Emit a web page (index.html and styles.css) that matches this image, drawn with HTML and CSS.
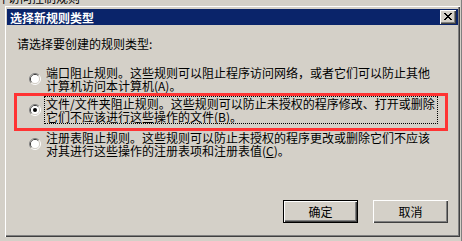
FILE: index.html
```html
<!DOCTYPE html>
<html lang="zh-CN">
<head>
<meta charset="utf-8">
<link rel="stylesheet" href="styles.css">
</head>
<body>
<div class="backdrop">
  <div class="backdrop-text">件访问控制规则</div>
</div>
<div class="dialog">
  <div class="titlebar">
    <span class="title">选择新规则类型</span>
    <span class="close">
      <svg width="8" height="7" viewBox="0 0 8 7" shape-rendering="crispEdges">
        <path d="M0 0h2v1h-2zM6 0h2v1h-2zM1 1h2v1h-2zM5 1h2v1h-2zM2 2h4v1h-4zM3 3h2v1h-2zM2 4h4v1h-4zM1 5h2v1h-2zM5 5h2v1h-2zM0 6h2v1h-2zM6 6h2v1h-2z" fill="#000"/>
      </svg>
    </span>
  </div>
  <div class="body">
    <div class="prompt">请选择要创建的规则类型:</div>
    <div class="options">
      <div class="option">
        <svg class="radio" width="12" height="12" viewBox="0 0 12 12">
          <path d="M2.11 9.89A5.5 5.5 0 0 1 9.89 2.11" fill="none" stroke="#808080"/>
          <path d="M9.89 2.11A5.5 5.5 0 0 1 2.11 9.89" fill="none" stroke="#fff"/>
          <path d="M2.82 9.18A4.5 4.5 0 0 1 9.18 2.82" fill="none" stroke="#404040"/>
          <path d="M9.18 2.82A4.5 4.5 0 0 1 2.82 9.18" fill="none" stroke="#d4d0c8"/>
          <circle cx="6" cy="6" r="4" fill="#fff"/>
        </svg>
        <span class="label">端口阻止规则。这些规则可以阻止程序访问网络，或者它们可以防止其他计算机访问本计算机(A)。</span>
      </div>
      <div class="option">
        <svg class="radio" width="12" height="12" viewBox="0 0 12 12">
          <path d="M2.11 9.89A5.5 5.5 0 0 1 9.89 2.11" fill="none" stroke="#808080"/>
          <path d="M9.89 2.11A5.5 5.5 0 0 1 2.11 9.89" fill="none" stroke="#fff"/>
          <path d="M2.82 9.18A4.5 4.5 0 0 1 9.18 2.82" fill="none" stroke="#404040"/>
          <path d="M9.18 2.82A4.5 4.5 0 0 1 2.82 9.18" fill="none" stroke="#d4d0c8"/>
          <circle cx="6" cy="6" r="4" fill="#fff"/>
          <circle cx="6" cy="6" r="2" fill="#000"/>
        </svg>
        <span class="label focused">文件/文件夹阻止规则。这些规则可以防止未授权的程序修改、打开或删除它们不应该进行这些操作的文件(B)。</span>
      </div>
      <div class="option third">
        <svg class="radio" width="12" height="12" viewBox="0 0 12 12">
          <path d="M2.11 9.89A5.5 5.5 0 0 1 9.89 2.11" fill="none" stroke="#808080"/>
          <path d="M9.89 2.11A5.5 5.5 0 0 1 2.11 9.89" fill="none" stroke="#fff"/>
          <path d="M2.82 9.18A4.5 4.5 0 0 1 9.18 2.82" fill="none" stroke="#404040"/>
          <path d="M9.18 2.82A4.5 4.5 0 0 1 2.82 9.18" fill="none" stroke="#d4d0c8"/>
          <circle cx="6" cy="6" r="4" fill="#fff"/>
        </svg>
        <span class="label">注册表阻止规则。这些规则可以防止未授权的程序更改或删除它们不应该对其进行这些操作的注册表项和注册表值(<span class="mnemonic">C</span>)。</span>
      </div>
    </div>
    <div class="buttons">
      <button class="btn default">确定</button>
      <button class="btn">取消</button>
    </div>
  </div>
</div>
<div class="highlight"></div>
</body>
</html>
```

FILE: styles.css
```css
* { box-sizing: border-box; }
html, body {
  margin: 0;
  padding: 0;
  width: 462px;
  height: 241px;
  overflow: hidden;
  background: #d4d0c8;
  font-family: "Noto Sans CJK SC", "Noto Sans", sans-serif;
  font-size: 12px;
  color: #000;
}
.backdrop {
  position: absolute;
  left: 0;
  top: 0;
  width: 462px;
  height: 241px;
  background: #d4d0c8;
  border-right: 1px solid #808080;
}
.backdrop-text {
  position: absolute;
  left: -4px;
  top: -9px;
  line-height: 13px;
}
.dialog {
  position: absolute;
  left: 4px;
  top: 5px;
  width: 456px;
  height: 232px;
  background: #d4d0c8;
  padding: 4px 2px 2px 3px;
  display: flex;
  flex-direction: column;
  box-shadow: inset 1px 1px 0 #d4d0c8, inset 2px 2px 0 #fff, inset -1px -1px 0 #404040, inset -2px -2px 0 #808080;
}
.titlebar {
  height: 16px;
  background: #0a246a;
  display: flex;
  align-items: center;
  justify-content: space-between;
  padding: 0 2px 0 3px;
}
.title {
  color: #fff;
  font-weight: bold;
  line-height: 13px;
}
.close {
  width: 16px;
  height: 14px;
  background: #d4d0c8;
  display: flex;
  align-items: center;
  justify-content: center;
  padding: 0 1px 1px 0;
  box-shadow: inset 1px 1px 0 #fff, inset -1px -1px 0 #404040, inset -2px -2px 0 #808080;
}
.close svg { display: block; }
.body {
  flex: 1;
  display: flex;
  flex-direction: column;
  padding: 12px 10px 12px 10px;
}
.prompt {
  line-height: 13px;
}
.options {
  margin-top: 15px;
  margin-left: 12px;
  display: flex;
  flex-direction: column;
  gap: 3px;
}
.option {
  display: flex;
  align-items: center;
}
.option.third { margin-top: 3px; }
.radio {
  flex: none;
  display: block;
  margin-right: 3px;
}
.label {
  display: inline-block;
  max-width: 394px;
  line-height: 13px;
  border: 1px dotted transparent;
  padding: 0 0 0 1px;
}
.label.focused {
  border-color: #000;
}
.mnemonic { text-decoration: underline; }
.buttons {
  margin-top: auto;
  display: flex;
  justify-content: flex-end;
  gap: 15px;
}
.btn {
  width: 75px;
  height: 23px;
  font-family: inherit;
  font-size: 12px;
  color: #000;
  background: #d4d0c8;
  border: none;
  padding: 0;
  line-height: 13px;
  box-shadow: inset 1px 1px 0 #fff, inset -1px -1px 0 #404040, inset -2px -2px 0 #808080;
}
.btn.default {
  border: 1px solid #000;
}
.highlight {
  position: absolute;
  left: 14px;
  top: 93px;
  width: 434px;
  height: 38px;
  border: 3px solid #ff3333;
}
```
